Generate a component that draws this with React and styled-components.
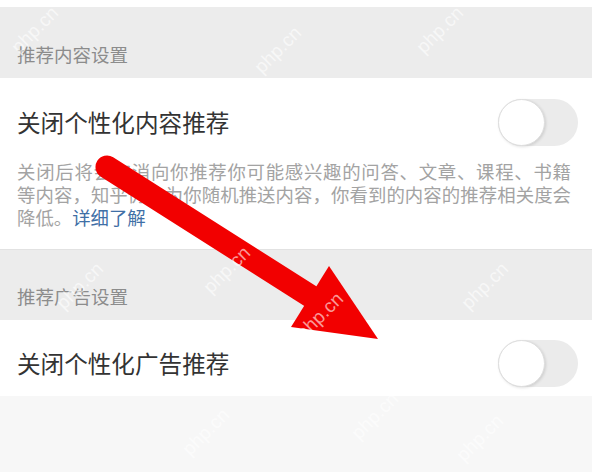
import React from 'react'
import styled, {createGlobalStyle} from 'styled-components'

const GlobalStyle = createGlobalStyle`
    html, body {
        margin: 0;
        padding: 0;
        background: #f7f7f7;
    }
    body {
        font-family: "Noto Sans CJK SC", "Noto Sans", sans-serif;
    }
`;

const Page = styled.div`
    position: relative;
    min-height: 472px;
    background: #f7f7f7;
    overflow: hidden;
`;

const TopStrip = styled.div`
    height: 7px;
    background: #ffffff;
`;

const SectionHeader = styled.div`
    height: 71px;
    display: flex;
    align-items: flex-end;
    padding: 0 17px 11px;
    box-sizing: border-box;
    background: #ececec;
    border-top: ${props => props.divided ? '1px solid #e2e2e2' : 'none'};
    color: #8c8c8c;
    font-size: 18.5px;
    line-height: 26px;
`;

const Row = styled.div`
    background: #ffffff;
    padding: ${props => props.top}px 14px ${props => props.bottom}px 17px;
`;

const TopLine = styled.div`
    height: 48px;
    display: flex;
    align-items: center;
    justify-content: space-between;
`;

const Title = styled.div`
    font-size: 23.6px;
    color: #333333;
    line-height: 28px;
`;

const Toggle = styled.div`
    width: 80px;
    height: 47px;
    border-radius: 24px;
    background: #ebebeb;
    position: relative;
    flex-shrink: 0;
`;

const Knob = styled.div`
    position: absolute;
    left: 0;
    top: 0;
    width: 45px;
    height: 45px;
    border-radius: 50%;
    background: #ffffff;
    border: 1px solid #dedede;
    box-shadow: 1px 1px 3px rgba(0, 0, 0, 0.12);
`;

const Desc = styled.div`
    margin-top: 14px;
    width: 554px;
    font-size: 18.4px;
    line-height: 23px;
    color: #a3a3a3;
`;

const DescLine = styled.span`
    display: block;
    text-align: ${props => props.justify ? 'justify' : 'left'};
    text-align-last: ${props => props.justify ? 'justify' : 'left'};
    white-space: nowrap;
`;

const More = styled.span`
    color: #3f6fa6;
`;

const Overlay = styled.svg`
    position: absolute;
    left: 0;
    top: 0;
    pointer-events: none;
`;

// faint "php.cn" watermarks lying over the screenshot
const Mark = styled.span`
    position: absolute;
    color: rgba(255, 255, 255, 0.6);
    font-family: "Liberation Sans", sans-serif;
    font-size: 19px;
    white-space: nowrap;
    transform: translate(-50%, -50%) rotate(-45deg);
    pointer-events: none;
`;

const marks = [
    {x: 35, y: 30}, {x: 278, y: 50}, {x: 440, y: 30},
    {x: 80, y: 286}, {x: 227, y: 270}, {x: 320, y: 316}, {x: 485, y: 286},
    {x: 206, y: 432}, {x: 375, y: 416}, {x: 480, y: 438},
];

function Switch() {
    return (
        <Toggle>
            <Knob/>
        </Toggle>
    )
}

export default function App() {
    return (
        <Page>
            <GlobalStyle/>
            <TopStrip/>
            <SectionHeader>推荐内容设置</SectionHeader>
            <Row top={20} bottom={20}>
                <TopLine>
                    <Title>关闭个性化内容推荐</Title>
                    <Switch/>
                </TopLine>
                <Desc>
                    <DescLine justify>关闭后将会取消向你推荐你可能感兴趣的问答、文章、课程、书籍</DescLine>
                    <DescLine justify>等内容，知乎仍会为你随机推送内容，你看到的内容的推荐相关度会</DescLine>
                    <DescLine>降低。<More>详细了解</More></DescLine>
                </Desc>
            </Row>
            <SectionHeader divided>推荐广告设置</SectionHeader>
            <Row top={19} bottom={9}>
                <TopLine>
                    <Title>关闭个性化广告推荐</Title>
                    <Switch/>
                </TopLine>
            </Row>
            <Overlay width="592" height="472" viewBox="0 0 592 472">
                <line x1="107" y1="167" x2="318" y2="301" stroke="#f20000" strokeWidth="23" strokeLinecap="round"/>
                <polygon points="329,266 378,339 291,327" fill="#f20000"/>
            </Overlay>
            {marks.map((m, i) => (
                <Mark key={i} style={{left: m.x, top: m.y}}>php.cn</Mark>
            ))}
        </Page>
    )
}
